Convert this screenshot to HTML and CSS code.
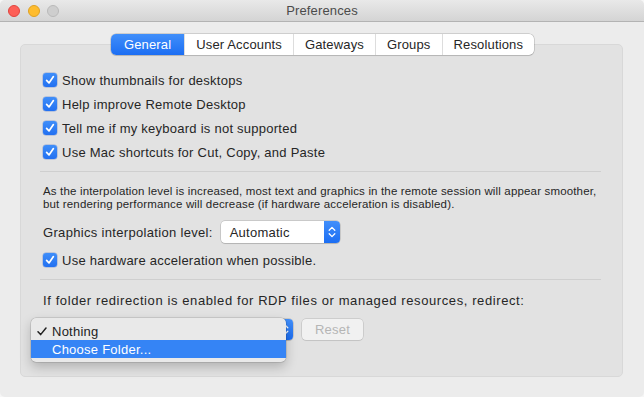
FILE: index.html
```html
<!DOCTYPE html>
<html>
<head>
<meta charset="utf-8">
<title>Preferences</title>
<link rel="stylesheet" href="styles.css">
</head>
<body>
<div class="window">
  <div class="titlebar">
    <div class="lights">
      <span class="light red"></span>
      <span class="light yellow"></span>
      <span class="light gray"></span>
    </div>
    <div class="title">Preferences</div>
    <div></div>
  </div>
  <div class="content">
    <div class="tabs">
      <span class="tab active">General</span>
      <span class="tab">User Accounts</span>
      <span class="tab">Gateways</span>
      <span class="tab">Groups</span>
      <span class="tab">Resolutions</span>
    </div>
    <div class="panel">
      <div class="checks">
        <div class="check"><span class="box"><svg width="14" height="14" viewBox="0 0 14 14"><path d="M3.6 7.4 L6 9.9 L10.4 3.6" fill="none" stroke="#fff" stroke-width="1.7" stroke-linecap="round" stroke-linejoin="round"/></svg></span>Show thumbnails for desktops</div>
        <div class="check"><span class="box"><svg width="14" height="14" viewBox="0 0 14 14"><path d="M3.6 7.4 L6 9.9 L10.4 3.6" fill="none" stroke="#fff" stroke-width="1.7" stroke-linecap="round" stroke-linejoin="round"/></svg></span>Help improve Remote Desktop</div>
        <div class="check"><span class="box"><svg width="14" height="14" viewBox="0 0 14 14"><path d="M3.6 7.4 L6 9.9 L10.4 3.6" fill="none" stroke="#fff" stroke-width="1.7" stroke-linecap="round" stroke-linejoin="round"/></svg></span>Tell me if my keyboard is not supported</div>
        <div class="check"><span class="box"><svg width="14" height="14" viewBox="0 0 14 14"><path d="M3.6 7.4 L6 9.9 L10.4 3.6" fill="none" stroke="#fff" stroke-width="1.7" stroke-linecap="round" stroke-linejoin="round"/></svg></span>Use Mac shortcuts for Cut, Copy, and Paste</div>
      </div>
      <div class="sep sep-1"></div>
      <p class="note">As the interpolation level is increased, most text and graphics in the remote session will appear smoother,<br>but rendering performance will decrease (if hardware acceleration is disabled).</p>
      <div class="field interp">
        <span class="field-label">Graphics interpolation level:</span>
        <div class="popup popup-auto">
          <span class="popup-text">Automatic</span>
          <span class="stepper"><svg width="16" height="22" viewBox="0 0 16 22"><path d="M5.2 9.2 L8 6.4 L10.8 9.2 M5.2 12.8 L8 15.6 L10.8 12.8" fill="none" stroke="#fff" stroke-width="1.3" stroke-linecap="round" stroke-linejoin="round"/></svg></span>
        </div>
      </div>
      <div class="check hw"><span class="box"><svg width="14" height="14" viewBox="0 0 14 14"><path d="M3.6 7.4 L6 9.9 L10.4 3.6" fill="none" stroke="#fff" stroke-width="1.7" stroke-linecap="round" stroke-linejoin="round"/></svg></span>Use hardware acceleration when possible.</div>
      <div class="sep sep-2"></div>
      <p class="redirect-label">If folder redirection is enabled for RDP files or managed resources, redirect:</p>
      <div class="field redirect">
        <div class="popup popup-wide">
          <span class="popup-text">Nothing</span>
          <span class="stepper"><svg width="16" height="21" viewBox="0 0 16 21"><path d="M5.2 8.8 L8 6 L10.8 8.8 M5.2 12.2 L8 15 L10.8 12.2" fill="none" stroke="#fff" stroke-width="1.3" stroke-linecap="round" stroke-linejoin="round"/></svg></span>
        </div>
        <button class="btn" disabled>Reset</button>
        <div class="menu">
          <div class="item"><span class="mark"><svg width="10" height="9" viewBox="0 0 10 9"><path d="M1 4.8 L3.6 7.6 L9 1" fill="none" stroke="#222" stroke-width="1.5" stroke-linecap="round" stroke-linejoin="round"/></svg></span>Nothing</div>
          <div class="item hl"><span class="mark"></span>Choose Folder...</div>
        </div>
      </div>
    </div>
  </div>
</div>
</body>
</html>
```

FILE: styles.css
```css
html, body {
  margin: 0;
  padding: 0;
  background: #f6f6f6;
}

body {
  font-family: "Liberation Sans", Arial, sans-serif;
}

.window {
  width: 644px;
  height: 397px;
  background: #ececec;
  border-radius: 5px;
  overflow: hidden;
  display: flex;
  flex-direction: column;
  color: #262626;
  font-size: 13px;
  letter-spacing: 0.25px;
}

/* Title bar */
.titlebar {
  height: 21px;
  flex: none;
  border-bottom: 1px solid #b3b3b3;
  background: linear-gradient(#e9e9e9, #d4d4d4);
  display: grid;
  grid-template-columns: 1fr auto 1fr;
  align-items: center;
}

.lights {
  display: flex;
  gap: 7.5px;
  padding-left: 8px;
  padding-top: 1px;
}

.light {
  width: 12px;
  height: 12px;
  border-radius: 50%;
  box-sizing: border-box;
}

.light.red {
  background: #fd5f57;
  border: 0.5px solid #e0443e;
}

.light.yellow {
  background: #febc2e;
  border: 0.5px solid #dea123;
}

.light.gray {
  background: #cecece;
  border: 0.5px solid #b9b9b9;
}

.title {
  color: #4b4b4b;
  font-size: 13px;
  letter-spacing: 0.15px;
}

/* Content */
.content {
  flex: 1;
  display: flex;
  flex-direction: column;
  padding-bottom: 20px;
}

.tabs {
  align-self: center;
  margin-top: 12px;
  height: 21px;
  display: flex;
  background: #ffffff;
  border-radius: 5px;
  box-shadow: 0 0 0 0.5px rgba(0, 0, 0, 0.25), 0 1px 1px rgba(0, 0, 0, 0.08);
  position: relative;
  z-index: 1;
  letter-spacing: 0.15px;
  margin-left: 1px;
}

.tab {
  padding: 0 11px;
  line-height: 21px;
  border-left: 1px solid #dddddd;
  color: #262626;
}

.tab:first-child {
  border-left: none;
}

.tab.active {
  color: #ffffff;
  background: linear-gradient(#418ffa, #1c6ef3);
  border-radius: 5px 0 0 5px;
  padding: 0 13px;
}

.panel {
  flex: 1;
  margin: -11px 21px 0 20px;
  background: #e2e2e2;
  border: 1px solid #d8d8d8;
  border-radius: 5px;
  padding: 23px 21px 0 19px;
}

.check {
  display: flex;
  align-items: center;
  gap: 5px;
  height: 24px;
  padding-left: 3px;
}

.box {
  width: 14px;
  height: 14px;
  flex: none;
  border-radius: 3px;
  background: linear-gradient(#3f8ef9, #2270f1);
  box-shadow: 0 0 0 0.5px rgba(0, 60, 180, 0.35);
  display: flex;
}

.sep {
  height: 1px;
  background: #cfcfcf;
}

.sep-1 {
  margin-top: 7px;
}

.note {
  margin: 13px 0 0 0;
  padding-left: 3px;
  font-size: 11.5px;
  line-height: 13px;
  letter-spacing: 0.16px;
}

.field {
  display: flex;
  align-items: center;
  padding-left: 3px;
}

.interp {
  margin-top: 10px;
}

.field-label {
  margin-right: 8px;
  letter-spacing: 0.32px;
}

.popup {
  height: 22px;
  box-sizing: border-box;
  background: #ffffff;
  border-radius: 4px;
  box-shadow: 0 0 0 0.5px rgba(0, 0, 0, 0.22), 0 1px 1px rgba(0, 0, 0, 0.1);
  display: flex;
  align-items: center;
  padding-left: 9px;
}

.popup-auto {
  width: 119px;
}

.popup-wide {
  width: 250px;
  height: 21px;
}

.stepper {
  margin-left: auto;
  width: 16px;
  height: 100%;
  background: linear-gradient(#418ffa, #1c6ef3);
  border-radius: 0 4px 4px 0;
  display: flex;
}

.hw {
  margin-top: 5px;
}

.sep-2 {
  margin-top: 7px;
}

.redirect-label {
  margin: 13px 0 0 0;
  padding-left: 3px;
  line-height: 16px;
  letter-spacing: 0.6px;
}

.redirect {
  margin-top: 10px;
  position: relative;
}

.btn {
  margin-left: 9px;
  width: 61px;
  height: 21px;
  border: none;
  border-radius: 4px;
  background: #f1f1f1;
  box-shadow: 0 0 0 0.5px rgba(0, 0, 0, 0.18), 0 1px 1px rgba(0, 0, 0, 0.05);
  color: #b5b5b5;
  font-family: inherit;
  font-size: 13px;
  letter-spacing: 0.25px;
  padding: 0;
}

.menu {
  position: absolute;
  left: -9px;
  top: -1px;
  width: 255px;
  padding: 4px 0;
  background: #e9e9e9;
  border-radius: 5px;
  box-shadow: 0 0 0 0.5px rgba(0, 0, 0, 0.2), 0 5px 12px rgba(0, 0, 0, 0.22);
}

.item {
  height: 18px;
  display: flex;
  align-items: center;
  color: #222222;
}

.mark {
  width: 21px;
  flex: none;
  display: flex;
  padding-left: 6px;
  box-sizing: border-box;
}

.item.hl {
  background: #3584f5;
  color: #ffffff;
}
```
